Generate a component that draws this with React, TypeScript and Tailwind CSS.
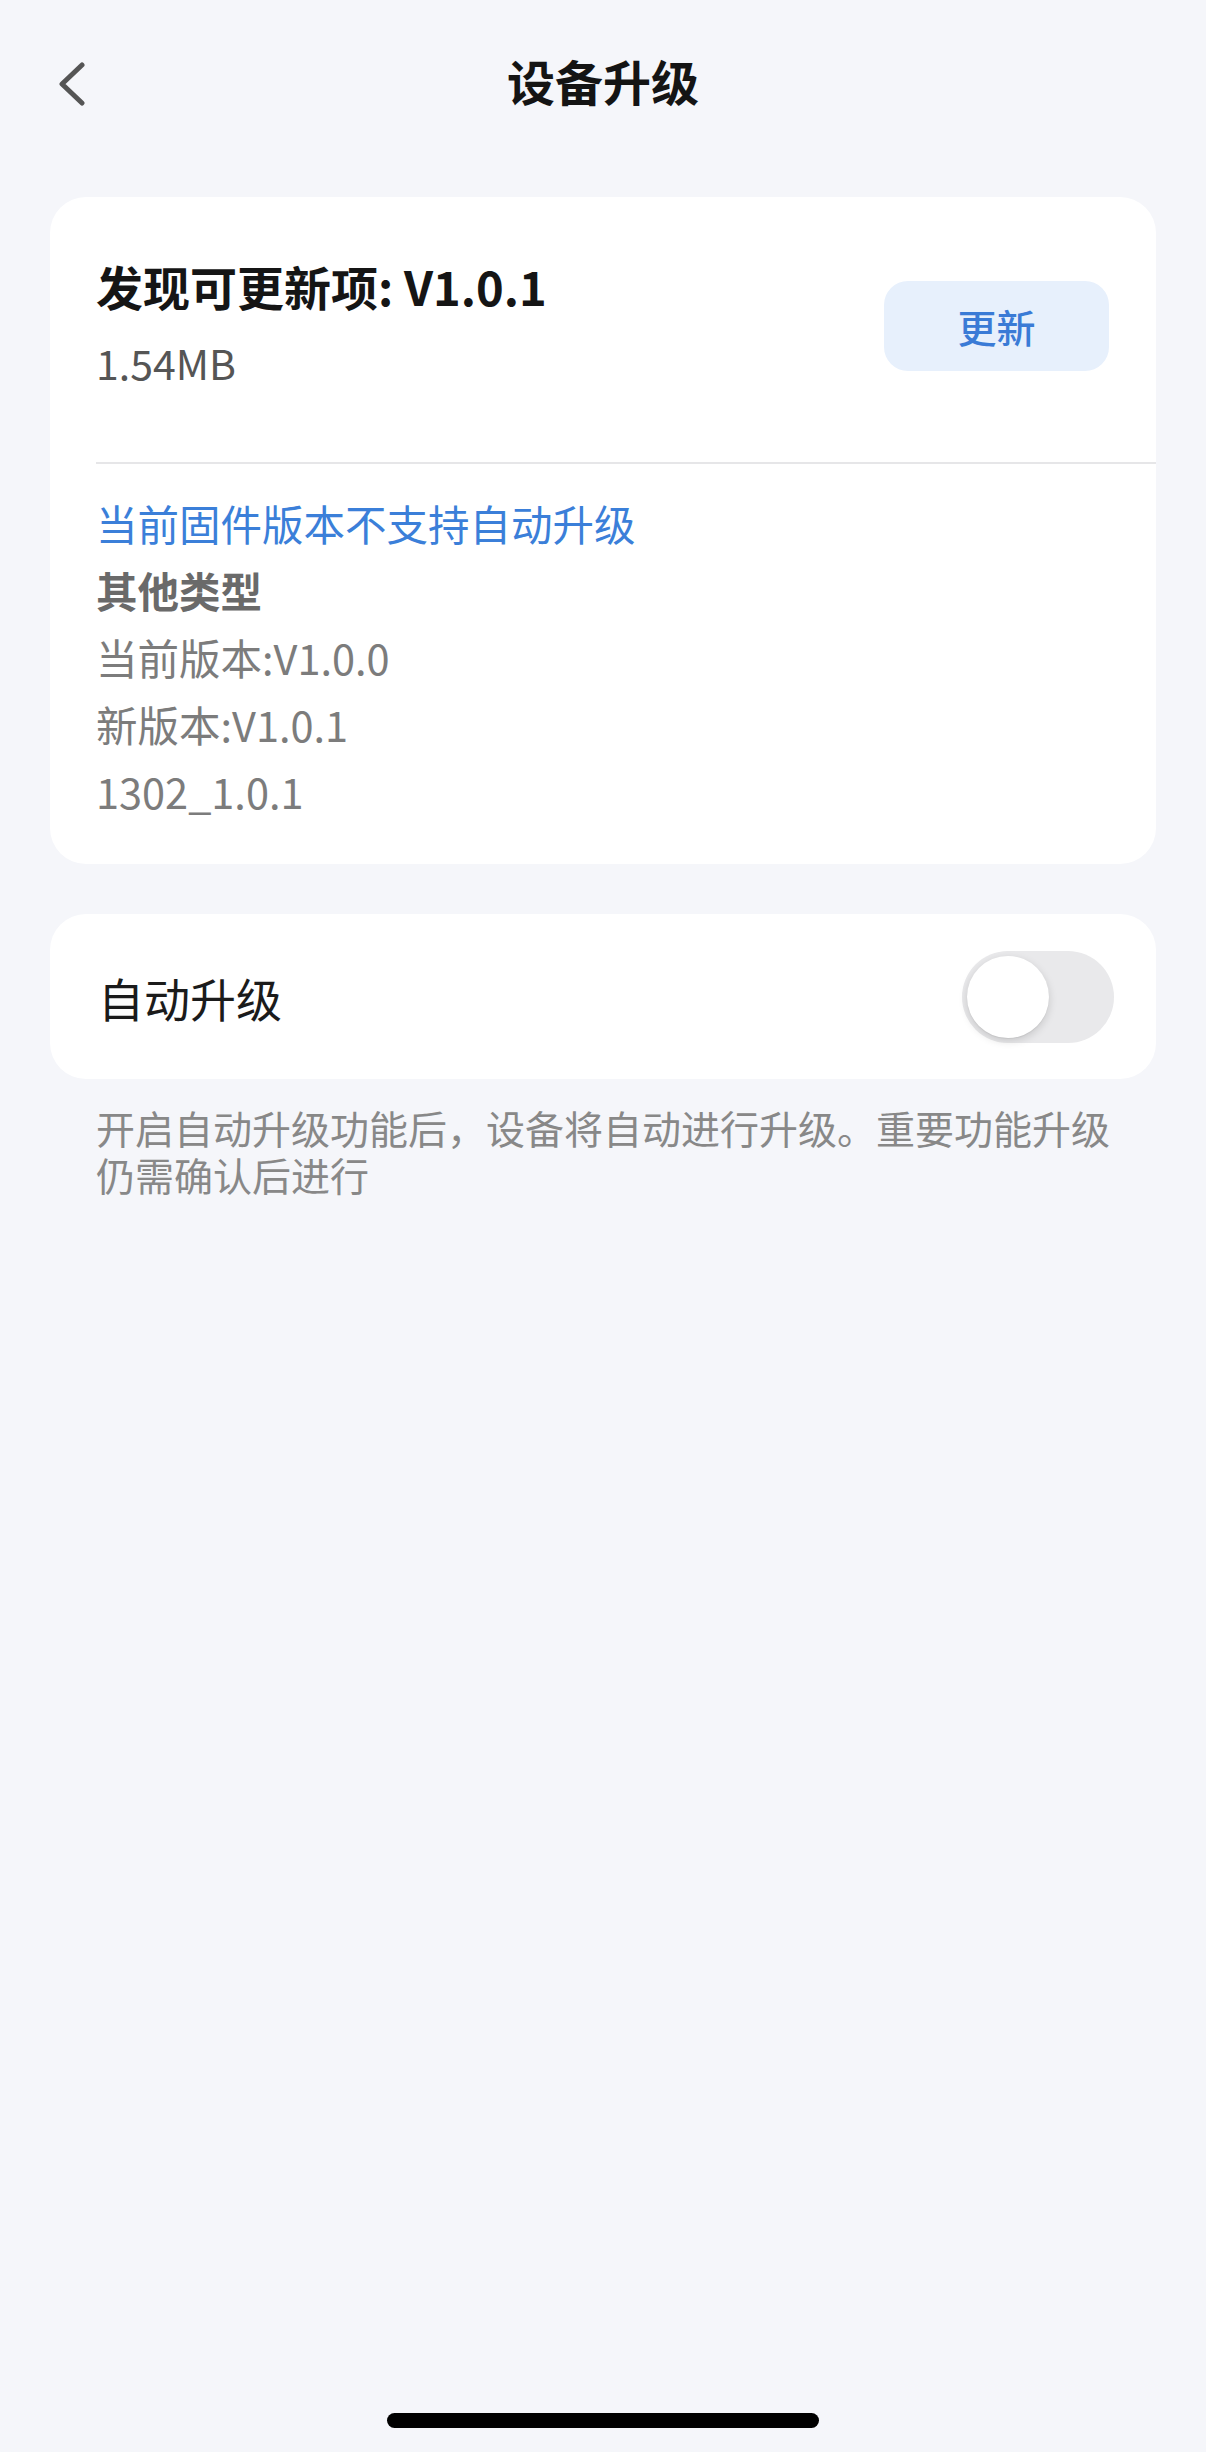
function BackIcon() {
  return (
    <svg width="28" height="44" viewBox="0 0 28 44" fill="none" className="block">
      <polyline
        points="24,3 4,22 24,41"
        stroke="#555"
        strokeWidth="5"
        strokeLinecap="round"
        strokeLinejoin="round"
      />
    </svg>
  );
}

function Toggle() {
  return (
    <div className="w-[152px] h-[92px] rounded-full bg-[#e9e9eb] p-[5px] flex items-center">
      <div className="w-[82px] h-[82px] rounded-full bg-white shadow-[0_3px_8px_rgba(0,0,0,0.15),0_1px_1px_rgba(0,0,0,0.06)]" />
    </div>
  );
}

export default function App() {
  const details = ['当前版本:V1.0.0', '新版本:V1.0.1', '1302_1.0.1'];

  return (
    <div className="w-[1206px] h-[2452px] bg-[#f5f6fa] flex flex-col font-['Noto_Sans_CJK_SC',sans-serif]">
      {/* header */}
      <div className="h-[168px] grid grid-cols-[1fr_auto_1fr] items-center px-[58px]">
        <div className="flex items-center">
          <BackIcon />
        </div>
        <h1 className="text-[48px] leading-[60px] pb-[8px] font-bold text-[#141414]">设备升级</h1>
        <div />
      </div>

      <main className="px-[50px] pt-[29px] flex flex-col">
        {/* update card */}
        <section className="bg-white rounded-[36px] pl-[46px]">
          <div className="flex items-start justify-between pr-[47px] pt-[59px] pb-[74px]">
            <div className="flex flex-col">
              <div className="text-[47px] leading-[60px] font-bold text-[#151515]">
                发现可更新项: V1.0.1
              </div>
              <div className="mt-[20px] text-[41px] leading-[52px] text-[#555]">1.54MB</div>
            </div>
            <button className="mt-[25px] w-[225px] h-[90px] rounded-[24px] bg-[#e7f0fc] text-[#3a7bd6] text-[39px] font-medium flex items-center justify-center">
              更新
            </button>
          </div>
          <div className="h-[2px] bg-[#e6e6e8]" />
          <div className="pt-[26px] pb-[39px] flex flex-col text-[41.5px] leading-[67px]">
            <div className="text-[#3b7fd9]">当前固件版本不支持自动升级</div>
            <div className="text-[#6a6a6a] font-bold">其他类型</div>
            {details.map((d) => (
              <div key={d} className="text-[#7c7c7c]">
                {d}
              </div>
            ))}
          </div>
        </section>

        {/* auto upgrade card */}
        <section className="mt-[50px] h-[165px] bg-white rounded-[36px] pl-[48px] pr-[42px] flex items-center justify-between">
          <span className="text-[46px] leading-[56px] text-[#1b1b1b]">自动升级</span>
          <Toggle />
        </section>

        <p className="mt-[25px] pl-[46px] pr-[30px] text-[39px] leading-[47px] text-[#888]">
          开启自动升级功能后，设备将自动进行升级。重要功能升级仍需确认后进行
        </p>
      </main>

      <div className="flex-1" />
      <div className="flex justify-center pb-[24px]">
        <div className="w-[432px] h-[15px] rounded-full bg-black" />
      </div>
    </div>
  );
}
